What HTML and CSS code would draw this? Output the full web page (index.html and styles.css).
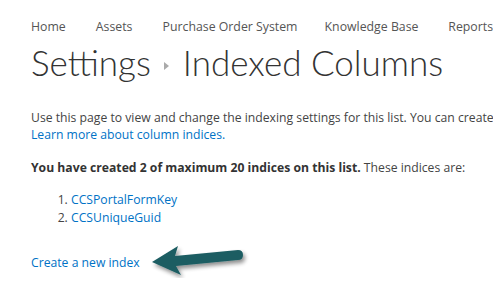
FILE: index.html
```html
<!DOCTYPE html>
<html lang="en">
<head>
  <meta charset="UTF-8" />
  <title>Indexed Columns</title>
  <link rel="stylesheet" href="styles.css">
</head>
<body>

  <div class="top_nav">
    <a href="#" class="nav-link">Home</a>
    <a href="#" class="nav-link">Assets</a>
    <a href="#" class="nav-link">Purchase Order System</a>
    <a href="#" class="nav-link">Knowledge Base</a>
    <a href="#" class="nav-link">Reports</a>
  </div>

  <h1 class="page_title">
    <span>Settings</span>
    <span class="crumb_arrow"></span>
    <span>Indexed Columns</span>
  </h1>

  <div class="content">
    <p class="intro">Use this page to view and change the indexing settings for this list. You can create new indices for columns.<br>
      <a href="#" class="link">Learn more about column indices.</a></p>

    <p class="summary"><strong>You have created 2 of maximum 20 indices on this list.</strong> These indices are:</p>

    <ol class="index_list">
      <li><a href="#" class="link">CCSPortalFormKey</a></li>
      <li><a href="#" class="link">CCSUniqueGuid</a></li>
    </ol>

    <div class="create_row">
      <a href="#" class="link">Create a new index</a>
      <svg class="pointer" width="100" height="36" viewBox="0 0 100 36">
        <defs>
          <filter id="shadow" x="-20%" y="-40%" width="140%" height="180%">
            <feGaussianBlur in="SourceAlpha" stdDeviation="2" />
            <feOffset dx="2" dy="3" result="off" />
            <feComponentTransfer result="blur">
              <feFuncA type="linear" slope="0.45" />
            </feComponentTransfer>
            <feMerge>
              <feMergeNode in="blur" />
              <feMergeNode in="SourceGraphic" />
            </feMerge>
          </filter>
        </defs>
        <path filter="url(#shadow)" fill="#1c5d62"
          d="M2 20 L28 4 L25 14 L88 8 Q93 8 93 13 Q93 18 88 18 L26 24 L31 33 Z" />
      </svg>
    </div>
  </div>

</body>
</html>
```

FILE: styles.css
```css
body {
  margin: 0;
  padding: 0 0 0 31px;
  background-color: white;
  font-family: "Open Sans", "Noto Sans", sans-serif;
  color: #444;
  overflow: hidden;
  white-space: nowrap;
}

.top_nav {
  display: flex;
  padding-top: 18px;
  height: 19px;
  font-size: 12.3px;
}

.nav-link {
  text-decoration: none;
  color: #555;
}

.nav-link:nth-child(1) { width: 66px; }
.nav-link:nth-child(2) { width: 68px; }
.nav-link:nth-child(3) { width: 165px; }
.nav-link:nth-child(4) { width: 126px; }

.page_title {
  display: flex;
  align-items: center;
  margin: 0;
  height: 50px;
  font-family: Lato, "Open Sans", sans-serif;
  font-size: 35px;
  font-weight: 300;
  color: #333;
}

.crumb_arrow {
  width: 0;
  height: 0;
  margin: 8px 14px 0 13px;
  border-top: 4px solid transparent;
  border-bottom: 4px solid transparent;
  border-left: 5px solid #aaa;
}

.content {
  font-size: 12.2px;
  line-height: 17px;
}

.content p {
  margin: 0;
}

.intro {
  padding-top: 22px;
}

.summary {
  padding-top: 16px;
}

.link {
  color: #0072c6;
  text-decoration: none;
}

strong {
  color: #333;
}

.index_list {
  margin: 15px 0 0 0;
  padding-left: 40px;
  line-height: 18px;
}

.create_row {
  display: flex;
  align-items: center;
  margin-top: 19px;
}

.pointer {
  margin: -4px 0 0 10px;
}
```
